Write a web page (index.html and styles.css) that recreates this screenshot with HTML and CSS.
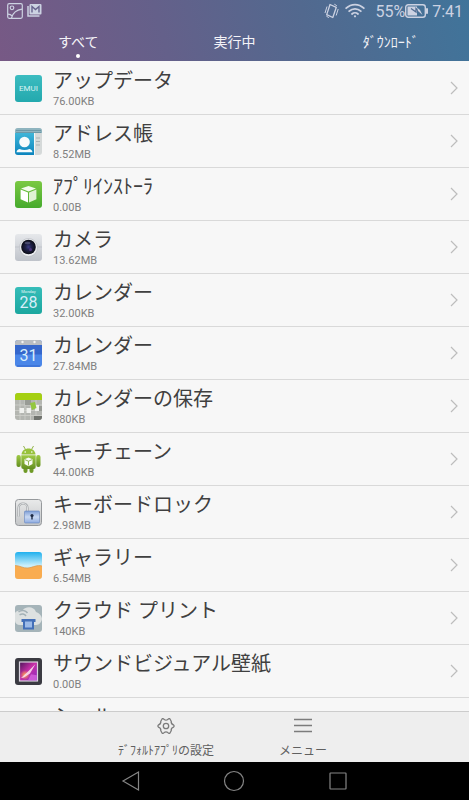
FILE: index.html
```
<!DOCTYPE html>
<html lang="ja">
<head>
    <meta charset="UTF-8">
    <meta name="viewport" content="width=device-width, initial-scale=1.0">
    <title>アプリ</title>
    <link rel="stylesheet" href="styles.css">
</head>
<body>
    <header class="header">
        <div class="status-bar">
            <div class="status-group">
                <svg width="16" height="16" viewBox="0 0 16 16" fill="none" stroke="currentColor">
                    <rect x="0.7" y="0.7" width="14.6" height="14.6" rx="1.5" stroke-width="1.2"/>
                    <circle cx="5" cy="4.8" r="1.8" stroke-width="1.2"/>
                    <path d="M4.5 15C6 9.5 9 7 15 6.2M1 11.2c2 0 3.3.8 4.2 1.8" stroke-width="1.2"/>
                </svg>
                <svg width="15" height="13" viewBox="0 0 15 13">
                    <path d="M1 2v10h11.5" fill="none" stroke="currentColor" stroke-width="1.5"/>
                    <rect x="2.5" y="0" width="12" height="10.5" rx="1" fill="currentColor"/>
                    <path d="M5 8.500V2.500l3.500 3 3.500-3v6" fill="none" stroke="#67628d" stroke-width="1.400"/>
                </svg>
            </div>
            <div class="status-group">
                <svg class="vibrate-icon" width="15" height="16" viewBox="0 0 15 16" fill="none" stroke="currentColor">
                    <path d="M6 1.5l6.300 2.800-3.500 10.200L2.700 11.600z" stroke-width="1.300" stroke-linejoin="round"/>
                    <path d="M1 10l2-6.500M12.200 12.500L14.200 6M2.300 13l2.500 1.700M10.300 1.200l2.500 1.500" stroke-width="1"/>
                </svg>
                <svg class="wifi-icon" width="20" height="15" viewBox="0 0 20 15" fill="none" stroke="currentColor" stroke-width="1.800" stroke-linecap="round">
                    <path d="M1.200 5.200c5-4.800 12.600-4.800 17.600 0M4.200 8.200c3.300-3.200 8.300-3.200 11.600 0M7 11c1.700-1.600 4.300-1.600 6 0"/>
                    <circle cx="10" cy="13.300" r="1.100" fill="currentColor" stroke="none"/>
                </svg>
                <span>55%</span>
                <svg width="23" height="14" viewBox="0 0 23 14">
                    <rect x="0.700" y="0.700" width="19.600" height="12.600" rx="2.500" fill="none" stroke="currentColor" stroke-width="1.400"/>
                    <rect x="21" y="4" width="2" height="6" rx="1" fill="currentColor"/>
                    <path d="M2.500 2.500H12v9H2.500z" fill="currentColor"/>
                    <path d="M6 4.500l5 3.500V4.500l5 5" fill="none" stroke="#4f6b91" stroke-width="1.300"/>
                    <path d="M12 3.500l1 3.500 4.500 4-2.500-5z" fill="currentColor"/>
                </svg>
                <span class="clock">7:41</span>
            </div>
        </div>
        <nav class="tabs">
            <button class="tab active">すべて</button>
            <button class="tab">実行中</button>
            <button class="tab">ﾀﾞｳﾝﾛｰﾄﾞ</button>
        </nav>
    </header>

    <main class="content">
        <ul class="app-list">
            <li>
                <a class="app-item" href="#">
                    <svg class="app-icon" viewBox="0 0 27 27">
                        <defs><linearGradient id="emui" x2="0" y2="1"><stop stop-color="#3cbcc0"/><stop offset="1" stop-color="#23a9ae"/></linearGradient></defs>
                        <rect width="27" height="27" rx="3" fill="url(#emui)"/>
                        <text class="emui-text" x="13.5" y="16">EMUI</text>
                    </svg>
                    <div class="app-info">
                        <div class="app-name">アップデータ</div>
                        <div class="app-size">76.00KB</div>
                    </div>
                    <svg class="chevron" viewBox="0 0 8 14"><path d="M1 1l6 6-6 6"/></svg>
                </a>
            </li>
            <li>
                <a class="app-item" href="#">
                    <svg class="app-icon" viewBox="0 0 27 27">
                        <defs><linearGradient id="contact" x2="0" y2="1"><stop stop-color="#3fb5d8"/><stop offset="1" stop-color="#0b84bd"/></linearGradient></defs>
                        <rect width="27" height="27" rx="3" fill="#d5d9d9"/>
                        <path d="M3 0h21a3 3 0 0 1 3 3v2H0V3a3 3 0 0 1 3-3z" fill="#8fb4bf"/>
                        <path d="M1 2.500h25M1 4.500h25" stroke="#5f8d9c" stroke-width="0.700"/>
                        <path d="M0 5h19v22H3a3 3 0 0 1-3-3z" fill="url(#contact)"/>
                        <path d="M19.500 5v22" stroke="#f5f7f7"/>
                        <path d="M21 10h4M21 13.500h4M21 17h4" stroke="#a9b3b5" stroke-width="1.200"/>
                        <circle cx="9.500" cy="14" r="5.300" fill="#f7fbfc"/>
                        <path d="M4.500 21c3 1.200 7 1.200 10 0 2 .6 2.800 1.600 3 3.300H1.500c.2-1.700 1-2.700 3-3.300z" fill="#f7fbfc"/>
                    </svg>
                    <div class="app-info">
                        <div class="app-name">アドレス帳</div>
                        <div class="app-size">8.52MB</div>
                    </div>
                    <svg class="chevron" viewBox="0 0 8 14"><path d="M1 1l6 6-6 6"/></svg>
                </a>
            </li>
            <li>
                <a class="app-item" href="#">
                    <svg class="app-icon" viewBox="0 0 27 27">
                        <defs><linearGradient id="installer" x2="0" y2="1"><stop stop-color="#7bc943"/><stop offset="1" stop-color="#46aa2d"/></linearGradient></defs>
                        <rect width="27" height="27" rx="3" fill="url(#installer)"/>
                        <path d="M13.500 5l7.500 2.600-7.500 3L6 7.600z" fill="#f4fbee"/>
                        <path d="M5.600 8.500l7.400 3V21.500l-7.400-3.300z" fill="#fff"/>
                        <path d="M21.400 8.500l-7.400 3V21.500l7.400-3.300z" fill="#dff2d3"/>
                    </svg>
                    <div class="app-info">
                        <div class="app-name">ｱﾌﾟﾘｲﾝｽﾄｰﾗ</div>
                        <div class="app-size">0.00B</div>
                    </div>
                    <svg class="chevron" viewBox="0 0 8 14"><path d="M1 1l6 6-6 6"/></svg>
                </a>
            </li>
            <li>
                <a class="app-item" href="#">
                    <svg class="app-icon" viewBox="0 0 27 27">
                        <defs>
                            <linearGradient id="camera" x2="0" y2="1"><stop stop-color="#e6e8eb"/><stop offset="1" stop-color="#bfc3ca"/></linearGradient>
                            <radialGradient id="lens"><stop stop-color="#3b3c86"/><stop offset="0.400" stop-color="#20224a"/><stop offset="1" stop-color="#0c0d16"/></radialGradient>
                        </defs>
                        <rect width="27" height="27" rx="3" fill="url(#camera)"/>
                        <path d="M0 13h27" stroke="#b9bdc4" stroke-width="0.700"/>
                        <circle cx="13.500" cy="13.500" r="9" fill="#eceef1" stroke="#b4b7be" stroke-width="0.600"/>
                        <circle cx="13.500" cy="13" r="7.300" fill="url(#lens)"/>
                        <ellipse cx="12.500" cy="9" rx="3" ry="1.300" fill="#73759e" opacity="0.500"/>
                        <circle cx="15.500" cy="15.500" r="1.500" fill="#5a3a8c" opacity="0.800"/>
                    </svg>
                    <div class="app-info">
                        <div class="app-name">カメラ</div>
                        <div class="app-size">13.62MB</div>
                    </div>
                    <svg class="chevron" viewBox="0 0 8 14"><path d="M1 1l6 6-6 6"/></svg>
                </a>
            </li>
            <li>
                <a class="app-item" href="#">
                    <svg class="app-icon" viewBox="0 0 27 27">
                        <defs><linearGradient id="calendar" x2="0" y2="1"><stop stop-color="#36bdb9"/><stop offset="1" stop-color="#1ba79f"/></linearGradient></defs>
                        <rect width="27" height="27" rx="3" fill="url(#calendar)"/>
                        <text class="weekday-text" x="13.500" y="6">Monday</text>
                        <text class="day-text" x="13.500" y="21">28</text>
                    </svg>
                    <div class="app-info">
                        <div class="app-name">カレンダー</div>
                        <div class="app-size">32.00KB</div>
                    </div>
                    <svg class="chevron" viewBox="0 0 8 14"><path d="M1 1l6 6-6 6"/></svg>
                </a>
            </li>
            <li>
                <a class="app-item" href="#">
                    <svg class="app-icon" viewBox="0 0 27 27">
                        <rect width="27" height="27" rx="3" fill="#4a86e8"/>
                        <path d="M0 5h27v9.500H0z" fill="#3567cc"/>
                        <path d="M3 0h21a3 3 0 0 1 3 3v2H0V3a3 3 0 0 1 3-3z" fill="#b9bdc2"/>
                        <circle cx="7.500" cy="2" r="1.200" fill="#f3f3f3"/>
                        <circle cx="19.500" cy="2" r="1.200" fill="#f3f3f3"/>
                        <path d="M2 26h23" stroke="#3567cc"/>
                        <text class="day-text" x="13.500" y="21">31</text>
                    </svg>
                    <div class="app-info">
                        <div class="app-name">カレンダー</div>
                        <div class="app-size">27.84MB</div>
                    </div>
                    <svg class="chevron" viewBox="0 0 8 14"><path d="M1 1l6 6-6 6"/></svg>
                </a>
            </li>
            <li>
                <a class="app-item" href="#">
                    <svg class="app-icon" viewBox="0 0 27 27">
                        <rect width="27" height="27" rx="3" fill="#b4b6b1"/>
                        <path d="M3 0h21a3 3 0 0 1 3 3v4H0V3a3 3 0 0 1 3-3z" fill="#a5d012"/>
                        <path d="M0 12h27M0 17.500h27M0 22.500h27M5 7v20M10 7v20M15.500 7v20M21 7v20" stroke="#cfd0cc" stroke-width="0.800"/>
                        <path d="M10 7h6v5h-6zM21 13h6v5h-6z" fill="#989b95"/>
                        <path d="M19 23h8v1a3 3 0 0 1-3 3h-5z" fill="#70736e"/>
                        <path d="M4.500 15h4.500v5H4.500zM11.500 15h4.500v5h-4.500zM20 12h4v6h-4z" fill="#f0f1ee"/>
                        <path d="M15 10l5-1 1.500 6-4.500 2z" fill="#93c73d"/>
                    </svg>
                    <div class="app-info">
                        <div class="app-name">カレンダーの保存</div>
                        <div class="app-size">880KB</div>
                    </div>
                    <svg class="chevron" viewBox="0 0 8 14"><path d="M1 1l6 6-6 6"/></svg>
                </a>
            </li>
            <li>
                <a class="app-item" href="#">
                    <svg class="app-icon" viewBox="0 0 27 27">
                        <defs><linearGradient id="robot" x2="0" y2="1"><stop stop-color="#9fca45"/><stop offset="1" stop-color="#648f20"/></linearGradient></defs>
                        <path d="M8.500 0l2 3.500M18.500 0l-2 3.500" stroke="#86ab35" stroke-width="0.900"/>
                        <path d="M6.500 8.500c.5-8 13.500-8 14 0z" fill="#98c23c"/>
                        <circle cx="10.200" cy="6" r="0.800" fill="#fff"/>
                        <circle cx="16.800" cy="6" r="0.800" fill="#fff"/>
                        <rect x="1.500" y="9" width="4.300" height="12" rx="2" fill="url(#robot)"/>
                        <rect x="21.200" y="9" width="4.300" height="12" rx="2" fill="url(#robot)"/>
                        <rect x="8.500" y="19" width="4" height="8" rx="2" fill="#6f9a26"/>
                        <rect x="14.500" y="19" width="4" height="8" rx="2" fill="#6f9a26"/>
                        <path d="M6.300 9.300h14.400V21a2 2 0 0 1-2 2H8.300a2 2 0 0 1-2-2z" fill="url(#robot)"/>
                        <path d="M13.500 11.500l4 1.800v4.800l-4 2.100-4-2.100v-4.800z" fill="#fafcf6"/>
                        <path d="M10 13.700l3.500 1.500 3.500-1.500M13.500 15.200v4.300" fill="none" stroke="#7ba52f" stroke-width="0.800"/>
                    </svg>
                    <div class="app-info">
                        <div class="app-name">キーチェーン</div>
                        <div class="app-size">44.00KB</div>
                    </div>
                    <svg class="chevron" viewBox="0 0 8 14"><path d="M1 1l6 6-6 6"/></svg>
                </a>
            </li>
            <li>
                <a class="app-item" href="#">
                    <svg class="app-icon" viewBox="0 0 27 27">
                        <defs>
                            <linearGradient id="plate" x2="0" y2="1"><stop stop-color="#e9eaea"/><stop offset="1" stop-color="#c4c6c8"/></linearGradient>
                            <linearGradient id="padlock" x2="0" y2="1"><stop stop-color="#7f9fd6"/><stop offset="0.500" stop-color="#c9d9f2"/><stop offset="1" stop-color="#8daae0"/></linearGradient>
                        </defs>
                        <rect x="0.500" y="0.500" width="26" height="26" rx="3" fill="url(#plate)" stroke="#96999c"/>
                        <path d="M3.500 17.500V9c0-6 9-6 9 0v3" fill="none" stroke="#a2a5a8" stroke-width="2.200"/>
                        <path d="M3.500 17.500V9c0-6 9-6 9 0v3" fill="none" stroke="#e4e6e8" stroke-width="0.900"/>
                        <rect x="9.500" y="12" width="15" height="12" rx="1" fill="url(#padlock)" stroke="#6785bd" stroke-width="0.600"/>
                        <circle cx="17" cy="16.500" r="1.600" fill="#1f2b45"/>
                        <path d="M16.300 17h1.400v3.500h-1.400z" fill="#1f2b45"/>
                    </svg>
                    <div class="app-info">
                        <div class="app-name">キーボードロック</div>
                        <div class="app-size">2.98MB</div>
                    </div>
                    <svg class="chevron" viewBox="0 0 8 14"><path d="M1 1l6 6-6 6"/></svg>
                </a>
            </li>
            <li>
                <a class="app-item" href="#">
                    <svg class="app-icon" viewBox="0 0 27 27">
                        <defs><linearGradient id="sky" x2="0" y2="1"><stop stop-color="#1fb0ee"/><stop offset="0.500" stop-color="#c9eefa"/></linearGradient></defs>
                        <rect width="27" height="27" rx="3" fill="url(#sky)"/>
                        <path d="M0 13.500c5 0 8 3 13 2.500s9-3.500 14-2V24a3 3 0 0 1-3 3H3a3 3 0 0 1-3-3z" fill="#f9ac50"/>
                        <path d="M0 13.500c5 0 8 3 13 2.500s9-3.500 14-2" fill="none" stroke="#d89a55" stroke-width="0.800"/>
                    </svg>
                    <div class="app-info">
                        <div class="app-name">ギャラリー</div>
                        <div class="app-size">6.54MB</div>
                    </div>
                    <svg class="chevron" viewBox="0 0 8 14"><path d="M1 1l6 6-6 6"/></svg>
                </a>
            </li>
            <li>
                <a class="app-item" href="#">
                    <svg class="app-icon" viewBox="0 0 27 27">
                        <rect width="27" height="27" rx="3" fill="#a5b4b9"/>
                        <path d="M0 8c1-2 4-3 7-2 3-5 12-5 14 1 3 1 6 4 6 7-1 5-4 6-7 6H5c-3 0-5-2-5-4z" fill="#dde1e1"/>
                        <path d="M3.500 7c3-2.500 7-2 9 1M4.500 10c2.500-1.800 5-1.200 6.500 1" fill="none" stroke="#a3b1b6" stroke-width="1.500"/>
                        <path d="M6.500 14h14v3h-1.500v7.500H8V17H6.500z" fill="#4470b8"/>
                        <path d="M10 16.500h7v6h-7z" fill="#9dbbe8"/>
                    </svg>
                    <div class="app-info">
                        <div class="app-name">クラウド プリント</div>
                        <div class="app-size">140KB</div>
                    </div>
                    <svg class="chevron" viewBox="0 0 8 14"><path d="M1 1l6 6-6 6"/></svg>
                </a>
            </li>
            <li>
                <a class="app-item" href="#">
                    <svg class="app-icon" viewBox="0 0 27 27">
                        <defs>
                            <linearGradient id="visual" x2="1" y2="1"><stop stop-color="#4b1658"/><stop offset="0.450" stop-color="#c62fa6"/><stop offset="1" stop-color="#8a2fc0"/></linearGradient>
                            <radialGradient id="glow"><stop stop-color="#ffb04a"/><stop offset="1" stop-color="#ff8a4a" stop-opacity="0"/></radialGradient>
                        </defs>
                        <rect width="27" height="27" rx="3" fill="#3b3b42"/>
                        <rect x="4.500" y="4" width="18" height="19" fill="url(#visual)" stroke="#d9d3de" stroke-width="1.200"/>
                        <circle cx="10" cy="17" r="5" fill="url(#glow)"/>
                        <path d="M6 20l7-6.500 7.500-7.500-5.500 9.500-6 4z" fill="#fbdcec" opacity="0.900"/>
                        <path d="M13 22.300l3-6 5.800 1v5z" fill="#d765dd" opacity="0.800"/>
                    </svg>
                    <div class="app-info">
                        <div class="app-name">サウンドビジュアル壁紙</div>
                        <div class="app-size">0.00B</div>
                    </div>
                    <svg class="chevron" viewBox="0 0 8 14"><path d="M1 1l6 6-6 6"/></svg>
                </a>
            </li>
            <li>
                <a class="app-item" href="#">
                    <svg class="app-icon" viewBox="0 0 27 27">
                        <rect width="27" height="27" rx="3" fill="#f3e3c4"/>
                    </svg>
                    <div class="app-info">
                        <div class="app-name">シール</div>
                        <div class="app-size">0.00B</div>
                    </div>
                    <svg class="chevron" viewBox="0 0 8 14"><path d="M1 1l6 6-6 6"/></svg>
                </a>
            </li>
        </ul>
    </main>

    <footer class="footer">
        <div class="toolbar">
            <button class="tool-btn">
                <svg width="18" height="18" viewBox="0 0 18 18" fill="none" stroke="currentColor" stroke-width="1.300" stroke-linejoin="round">
                    <path d="M5.200 1.700Q6.500 1.400 7.200 2.500Q9 3.800 10.800 2.500Q11.500 1.400 12.800 1.700L14.200 4.200Q13.900 7 16.500 7.800L17.200 9L16.500 10.200Q13.900 11 14.200 13.800L12.800 16.300Q11.500 16.600 10.800 15.500Q9 14.200 7.200 15.500Q6.500 16.600 5.200 16.300L3.800 13.800Q4.100 11 1.500 10.200L0.800 9L1.500 7.800Q4.100 7 3.800 4.200Z"/>
                    <circle cx="9" cy="9" r="2.700"/>
                </svg>
                <span>ﾃﾞﾌｫﾙﾄｱﾌﾟﾘの設定</span>
            </button>
            <button class="tool-btn">
                <svg width="18" height="18" viewBox="0 0 18 18" stroke="currentColor" stroke-width="1.300">
                    <path d="M0 2.500h18M0 8.500h18M0 14.500h18"/>
                </svg>
                <span>メニュー</span>
            </button>
        </div>
        <div class="nav-bar">
            <button class="nav-btn" aria-label="戻る">
                <svg width="22" height="22" viewBox="0 0 22 22"><path d="M18.500 2v18L3 11z"/></svg>
            </button>
            <button class="nav-btn" aria-label="ホーム">
                <svg width="22" height="22" viewBox="0 0 22 22"><circle cx="11" cy="11" r="9.500"/></svg>
            </button>
            <button class="nav-btn" aria-label="履歴">
                <svg width="22" height="22" viewBox="0 0 22 22"><rect x="3" y="3" width="16" height="16" rx="0.500"/></svg>
            </button>
        </div>
    </footer>
</body>
</html>
```
FILE: styles.css
```
* { margin: 0; padding: 0; box-sizing: border-box; }
body {
    font-family: Roboto, 'Noto Sans CJK JP', sans-serif;
    background: #f7f7f7;
    height: 100vh;
    display: flex;
    flex-direction: column;
    overflow: hidden;
}
button { background: none; border: none; font: inherit; color: inherit; cursor: pointer; }
svg { display: block; flex-shrink: 0; }
.header {
    background: linear-gradient(75deg, #775985 0%, #64608a 35%, #52698f 65%, #40749a 100%);
    color: #f4f3f8;
    flex-shrink: 0;
}
.status-bar {
    height: 21px;
    padding: 0 6px 0 7px;
    display: flex;
    justify-content: space-between;
    align-items: center;
    font-size: 16px;
    color: #ccd2e2;
}
.status-group { display: flex; align-items: center; gap: 4px; }
.vibrate-icon { margin-right: 2px; }
.wifi-icon { margin-right: 6px; }
.status-group span { line-height: 21px; padding-top: 2px; margin-right: -4px; }
.status-group .clock { margin-right: 0; }
.tabs { display: flex; }
.tab {
    flex: 1;
    height: 40px;
    font-size: 14px;
    position: relative;
}
.tab.active::after {
    content: '';
    position: absolute;
    left: 50%;
    bottom: 3px;
    width: 4px;
    height: 4px;
    margin-left: -2px;
    border-radius: 50%;
    background: #fff;
}
.content { flex: 1; min-height: 0; overflow-y: auto; scrollbar-width: none; }
.app-list { list-style: none; padding-top: 1px; }
.app-item {
    display: flex;
    align-items: center;
    gap: 11px;
    height: 53px;
    padding: 0 11px 0 15px;
    border-bottom: 1px solid #d9d9d9;
    color: #404040;
    text-decoration: none;
}
.app-icon { width: 27px; height: 27px; }
.app-info { flex: 1; }
.app-name { font-size: 20px; line-height: 28px; }
.app-size { font-size: 11px; line-height: 14px; color: #808080; }
.chevron { width: 8px; height: 14px; fill: none; stroke: #bdbdbd; stroke-width: 1.2; }
.emui-text { font-size: 8px; fill: #d9f3f3; text-anchor: middle; }
.weekday-text { font-size: 4px; fill: #e5f7f6; text-anchor: middle; }
.day-text { font-size: 16px; fill: #d8eefa; text-anchor: middle; }
.footer { flex-shrink: 0; }
.toolbar {
    display: flex;
    justify-content: center;
    height: 51px;
    background: #eee;
    border-top: 1px solid #ccc;
    color: #606060;
}
.tool-btn {
    width: 137px;
    padding-top: 2px;
    display: flex;
    flex-direction: column;
    align-items: center;
    justify-content: center;
    gap: 8px;
    font-size: 12px;
    line-height: 16px;
    white-space: nowrap;
}
.tool-btn svg { color: #7c7c7c; }
.nav-bar {
    height: 38px;
    display: flex;
    justify-content: center;
    background: #000;
}
.nav-btn { width: 22%; display: flex; align-items: center; justify-content: center; }
.nav-btn svg { fill: none; stroke: #858585; stroke-width: 1.2; }
```
